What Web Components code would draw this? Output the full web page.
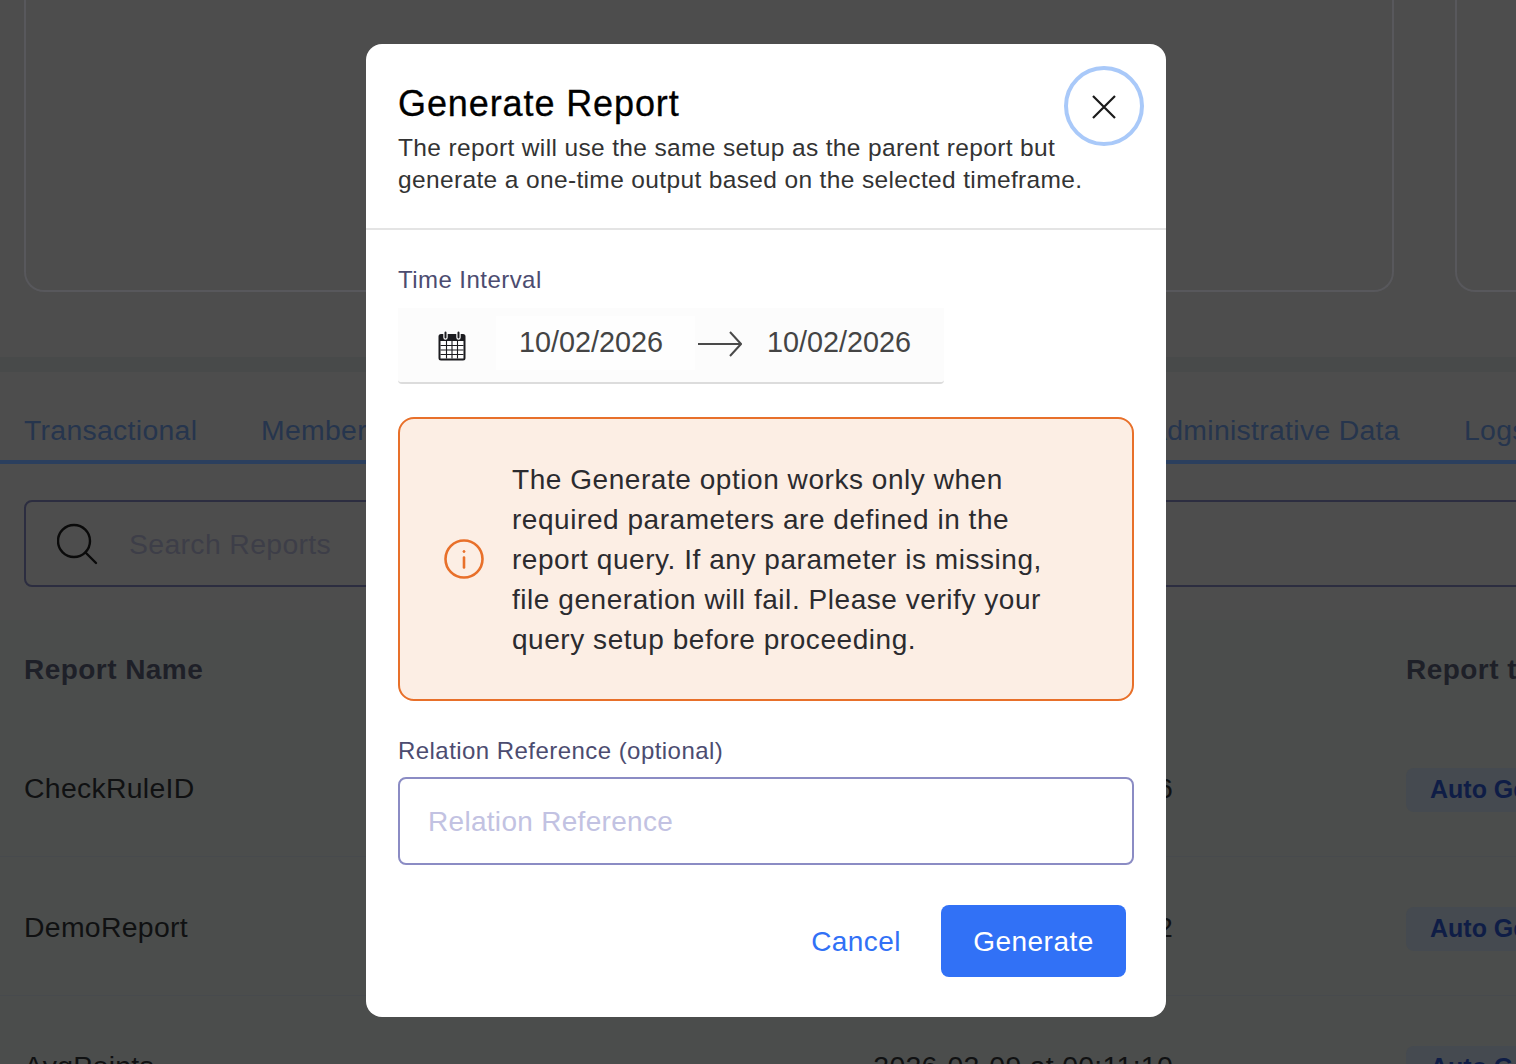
<!DOCTYPE html>
<html>
<head>
<meta charset="utf-8">
<title>Generate Report</title>
<style>
  html, body { margin: 0; height: 100%; overflow: hidden; background: #4d4d4d; }
  body { font-family: "Liberation Sans", Arial, sans-serif; }
</style>
</head>
<body>
<report-page></report-page>
<modal-scrim>
  <report-modal></report-modal>
</modal-scrim>

<script>
class ReportTab extends HTMLElement {
  connectedCallback() {
    this.attachShadow({ mode: 'open' });
    this.shadowRoot.innerHTML = `
      <style>
        :host { display: block; font-size: 28.4px; letter-spacing: .3px; line-height: 34px; color: #26354d; white-space: nowrap; overflow: hidden; }
      </style>
      <slot></slot>
    `;
  }
}

class ReportRow extends HTMLElement {
  connectedCallback() {
    this.attachShadow({ mode: 'open' });
    this.shadowRoot.innerHTML = `
      <style>
        :host {
          display: grid;
          grid-template-columns: 848px 534px 1fr;
          height: 136px;
          padding: 2px 0 0 24px;
          align-items: center;
          border-bottom: 1px solid #474a4d;
          font-size: 28.4px;
          letter-spacing: .3px;
          color: #101112;
        }
        .created { text-align: right; padding-right: 233px; }
        .badge {
          display: block;
          margin-top: 3px;
          width: 200px;
          height: 44px;
          line-height: 43px;
          padding-left: 24px;
          background: #454a50;
          border-radius: 8px;
          font-size: 25px;
          letter-spacing: 0;
          font-weight: bold;
          color: #0f1d46;
          white-space: nowrap;
        }
      </style>
      <div>${this.getAttribute('name')}</div>
      <div class="created">${this.getAttribute('created')}</div>
      <div><span class="badge">Auto Generated</span></div>
    `;
  }
}

class ReportPage extends HTMLElement {
  connectedCallback() {
    this.attachShadow({ mode: 'open' });
    this.shadowRoot.innerHTML = `
      <style>
        :host { display: block; width: 1516px; height: 1064px; overflow: hidden; background: #4d4d4d; }
        .cards {
          height: 357px;
          box-sizing: border-box;
          padding: 0 0 65px 24px;
          display: grid;
          grid-template-columns: 1370px 200px;
          gap: 61px;
        }
        .card { border: 2px solid #58585c; border-top: 0; border-radius: 0 0 20px 20px; }
        .band { height: 15px; background: #484a4a; }
        .tabs {
          height: 60px;
          display: grid;
          grid-template-columns: 237px 887px 316px 1fr;
          align-items: end;
          padding: 28px 0 0 24px;
          border-bottom: 4px solid #2b3f5e;
        }
        .tabs report-tab { padding-bottom: 13px; }
        .search {
          margin: 36px 0 0 24px;
          height: 83px;
          width: 1600px;
          display: flex;
          align-items: center;
          gap: 30px;
          padding-left: 31px;
          border: 2px solid #2c2d40;
          border-radius: 8px;
          font-size: 28.4px;
          letter-spacing: .35px;
          color: #3d3e48;
        }
        .search span { padding-top: 2px; }
        .search svg { display: block; flex: none; }
        .table { background: #4b4d4c; margin-top: 33px; }
        .head {
          display: grid;
          grid-template-columns: 1382px 1fr;
          height: 98px;
          box-sizing: border-box;
          padding: 34px 0 0 24px;
          font-size: 28px;
          letter-spacing: .45px;
          font-weight: bold;
          color: #1e2028;
        }
        .tail { white-space: nowrap; }
      </style>
      <div class="cards"><div class="card"></div><div class="card"></div></div>
      <div class="band"></div>
      <div class="tabs">
        <report-tab>Transactional</report-tab>
        <report-tab>Member</report-tab>
        <report-tab>Administrative Data</report-tab>
        <report-tab>Logs</report-tab>
      </div>
      <div class="search">
        <svg width="42" height="42" viewBox="0 0 42 42" fill="none" stroke="#0a0a0a" stroke-width="2.4">
          <circle cx="17" cy="18" r="16"/><path d="M28.5 29.5 39 40" stroke-linecap="round"/>
        </svg>
        <span>Search Reports</span>
      </div>
      <div class="table">
        <div class="head"><div>Report Name</div><div class="tail">Report type</div></div>
        <report-row name="CheckRuleID" created="6"></report-row>
        <report-row name="DemoReport" created="2"></report-row>
        <report-row name="AvgPoints" created="2026-02-09 at 00:11:10"></report-row>
      </div>
    `;
  }
}

class ModalScrim extends HTMLElement {
  connectedCallback() {
    this.attachShadow({ mode: 'open' });
    this.shadowRoot.innerHTML = `
      <style>
        :host {
          position: fixed;
          inset: 0;
          display: flex;
          justify-content: center;
          align-items: flex-start;
          padding: 44px 0 0 16px;
          box-sizing: border-box;
        }
      </style>
      <slot></slot>
    `;
  }
}

class DateRange extends HTMLElement {
  connectedCallback() {
    this.attachShadow({ mode: 'open' });
    this.shadowRoot.innerHTML = `
      <style>
        :host {
          display: flex;
          width: 546px;
          height: 76px;
          box-sizing: border-box;
          background: #fcfcfc;
          border-bottom: 2px solid #dcdcdc;
          border-radius: 0 0 4px 4px;
          font-size: 28.8px;
          color: #444;
        }
        .icon { width: 98px; display: flex; justify-content: center; padding: 23px 0 0 10px; box-sizing: border-box; }
        .date {
          width: 199px;
          height: 54px;
          margin-top: 8px;
          box-sizing: border-box;
          padding: 10px 0 0 23px;
          background: #fefefe;
        }
        .date.to { width: 150px; padding-left: 22px; background: none; }
        .arrow { width: 50px; padding: 23px 0 0 3px; box-sizing: border-box; }
        svg { display: block; }
      </style>
      <div class="icon">
        <svg width="28" height="30" viewBox="0 0 28 30">
          <path d="M3 3h22a2.5 2.5 0 0 1 2.5 2.5V27a2.5 2.5 0 0 1-2.5 2.5H3A2.5 2.5 0 0 1 .5 27V5.5A2.5 2.5 0 0 1 3 3z" fill="#1b1b1f"/>
          <path d="M2.5 10h23v17.500h-23z" fill="#fff"/>
          <path d="M2.5 14.500h23M2.500 19h23M2.500 23.500h23M8.500 10v17.500M14 10v17.500M19.500 10v17.500" stroke="#1b1b1f" stroke-width="1.100"/>
          <path d="M7.500 1.500v5M20.500 1.500v5" stroke="#fff" stroke-width="4.400" stroke-linecap="round"/>
          <path d="M7.500 1.500v5M20.500 1.500v5" stroke="#1b1b1f" stroke-width="2" stroke-linecap="round"/>
        </svg>
      </div>
      <div class="date">10/02/2026</div>
      <div class="arrow">
        <svg width="44" height="26" viewBox="0 0 44 26" fill="none" stroke="#4a4a4a" stroke-width="2">
          <path d="M0 13h43M32 1l11 12-11 12"/>
        </svg>
      </div>
      <div class="date to">10/02/2026</div>
    `;
  }
}

class InfoAlert extends HTMLElement {
  connectedCallback() {
    this.attachShadow({ mode: 'open' });
    this.shadowRoot.innerHTML = `
      <style>
        :host {
          display: flex;
          align-items: center;
          height: 284px;
          box-sizing: border-box;
          padding: 0 44px;
          gap: 28px;
          background: #fceee4;
          border: 2px solid #e8702a;
          border-radius: 16px;
          font-size: 28px;
          letter-spacing: .55px;
          line-height: 40px;
          color: #2b2b2f;
        }
        svg { flex: none; display: block; }
        .text { padding-top: 2px; }
      </style>
      <svg width="40" height="40" viewBox="0 0 40 40" fill="none" stroke="#e8702a" stroke-width="2.6">
        <circle cx="20" cy="20" r="18.5"/>
        <path d="M20 18.500v10" stroke-linecap="round"/>
        <circle cx="20" cy="12.500" r="1" fill="#e8702a" stroke-width="1"/>
      </svg>
      <div class="text"><slot></slot></div>
    `;
  }
}

class ReportModal extends HTMLElement {
  connectedCallback() {
    this.attachShadow({ mode: 'open' });
    this.shadowRoot.innerHTML = `
      <style>
        :host {
          display: block;
          position: relative;
          width: 800px;
          height: 973px;
          background: #fff;
          border-radius: 16px;
          color: #222;
        }
        header {
          height: 186px;
          box-sizing: border-box;
          padding: 39px 32px 0;
          border-bottom: 2px solid #e4e4e4;
        }
        h2 { margin: 0; font-size: 36px; letter-spacing: .9px; line-height: 42px; font-weight: normal; color: #000; -webkit-text-stroke: .3px #000; }
        p { margin: 7px 0 0; font-size: 24.5px; letter-spacing: .36px; line-height: 32px; color: #333; }
        .close {
          position: absolute;
          top: 22px;
          right: 22px;
          width: 80px;
          height: 80px;
          box-sizing: border-box;
          border: 4px solid #a9c9f9;
          border-radius: 50%;
          background: #fff;
          display: flex;
          align-items: center;
          justify-content: center;
          padding-top: 2px;
        }
        .body { padding: 34px 32px 0; }
        .label { font-size: 24px; letter-spacing: .45px; line-height: 32px; color: #4c4c70; }
        date-range { margin-top: 12px; }
        info-alert { margin-top: 33px; }
        .rel { margin-top: 34px; }
        .field {
          margin-top: 10px;
          height: 88px;
          box-sizing: border-box;
          padding: 2px 28px 0;
          display: flex;
          align-items: center;
          border: 2px solid #8b8cc4;
          border-radius: 8px;
          font-size: 28px;
          letter-spacing: .3px;
          color: #c2c2e2;
        }
        footer {
          margin: 40px 8px 0 0;
          display: flex;
          justify-content: flex-end;
          align-items: center;
          gap: 40px;
          font-size: 28px;
          letter-spacing: .45px;
          color: #3171f6;
        }
        .cancel { padding-top: 2px; }
        .primary {
          width: 185px;
          height: 72px;
          box-sizing: border-box;
          padding-top: 2px;
          display: flex;
          align-items: center;
          justify-content: center;
          background: #3171f6;
          border-radius: 8px;
          color: #fff;
        }
      </style>
      <header>
        <h2>Generate Report</h2>
        <p>The report will use the same setup as the parent report but<br>generate a one-time output based on the selected timeframe.</p>
      </header>
      <div class="close">
        <svg width="24" height="24" viewBox="0 0 24 24" stroke="#1a1a1a" stroke-width="2.2" fill="none"><path d="M1 1l22 22M23 1 1 23"/></svg>
      </div>
      <div class="body">
        <div class="label">Time Interval</div>
        <date-range></date-range>
        <info-alert>The Generate option works only when<br>required parameters are defined in the<br>report query. If any parameter is missing,<br>file generation will fail. Please verify your<br>query setup before proceeding.</info-alert>
        <div class="label rel">Relation Reference (optional)</div>
        <div class="field">Relation Reference</div>
        <footer>
          <span class="cancel">Cancel</span>
          <span class="primary">Generate</span>
        </footer>
      </div>
    `;
  }
}

customElements.define('report-tab', ReportTab);
customElements.define('report-row', ReportRow);
customElements.define('report-page', ReportPage);
customElements.define('modal-scrim', ModalScrim);
customElements.define('date-range', DateRange);
customElements.define('info-alert', InfoAlert);
customElements.define('report-modal', ReportModal);
</script>
</body>
</html>
